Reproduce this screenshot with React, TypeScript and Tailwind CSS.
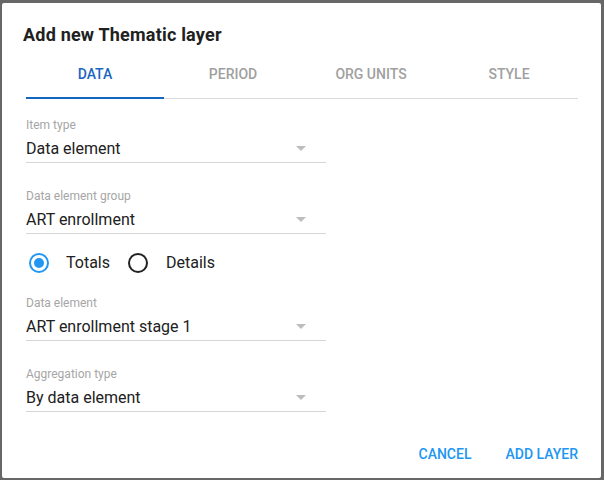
import React from "react";

function Arrow() {
  return (
    <svg width="10" height="5" viewBox="0 0 10 5" className="absolute right-[20px] top-[9px]">
      <path d="M0 0 L10 0 L5 5 Z" fill="#bdbdbd" />
    </svg>
  );
}

function Field({ label, value, top }: { label: string; value: string; top: string }) {
  return (
    <div className={`${top} w-[300px]`}>
      <div className="h-[16px] text-[12px] leading-[16px] text-[#a6a6a6]">{label}</div>
      <div className="relative mt-[4px] h-[26px] border-b border-[#d6d6d6] text-[16px] leading-[24px] text-[#212121]">
        {value}
        <Arrow />
      </div>
    </div>
  );
}

function Radio({ checked }: { checked: boolean }) {
  return checked ? (
    <div className="flex h-[20px] w-[20px] items-center justify-center rounded-full border-2 border-[#2196f3]">
      <div className="h-[10px] w-[10px] rounded-full bg-[#2196f3]" />
    </div>
  ) : (
    <div className="h-[20px] w-[20px] rounded-full border-2 border-[#212121]" />
  );
}

export default function App() {
  const tabs = ["DATA", "PERIOD", "ORG UNITS", "STYLE"];
  return (
    <div
      className="h-[480px] w-[604px] overflow-hidden bg-[#676767] pl-[2px] pt-[3px]"
      style={{ fontFamily: "Roboto, 'Liberation Sans', sans-serif" }}
    >
      <div className="flex h-[475px] w-[599px] flex-col rounded-[2px] bg-white">
        <div className="ml-[21px] mt-[22px] h-[20px] text-[18px] font-bold leading-[20px] tracking-[0.2px] text-[#212121]">
          Add new Thematic layer
        </div>
        <div className="ml-[24px] mt-[6px] w-[552px]">
          <div className="flex h-[46px]">
            {tabs.map((t, i) => (
              <div
                key={t}
                className={`flex w-[138px] items-center justify-center text-[14px] font-medium ${
                  i === 0 ? "text-[#1a66c2]" : "text-[#a0a0a0]"
                }`}
              >
                {t}
              </div>
            ))}
          </div>
          <div className="flex h-[2px]">
            <div className="h-[2px] w-[138px] bg-[#1565c0]" />
            <div className="mt-[1px] h-[1px] flex-1 bg-[#dcdcdc]" />
          </div>
        </div>
        <div className="ml-[24px] flex flex-col">
          <Field label="Item type" value="Data element" top="mt-[18px]" />
          <Field label="Data element group" value="ART enrollment" top="mt-[25px]" />
          <div className="mt-[19px] flex h-[20px] items-center text-[16px] text-[#212121]">
            <div className="ml-[3px]">
              <Radio checked />
            </div>
            <span className="ml-[17px]">Totals</span>
            <div className="ml-[18px]">
              <Radio checked={false} />
            </div>
            <span className="ml-[18px]">Details</span>
          </div>
          <Field label="Data element" value="ART enrollment stage 1" top="mt-[22px]" />
          <Field label="Aggregation type" value="By data element" top="mt-[25px]" />
        </div>
        <div className="mt-[32px] flex justify-end pr-[23px] text-[14px] font-medium text-[#2196f3]">
          <span>CANCEL</span>
          <span className="ml-[34px]">ADD LAYER</span>
        </div>
      </div>
    </div>
  );
}
